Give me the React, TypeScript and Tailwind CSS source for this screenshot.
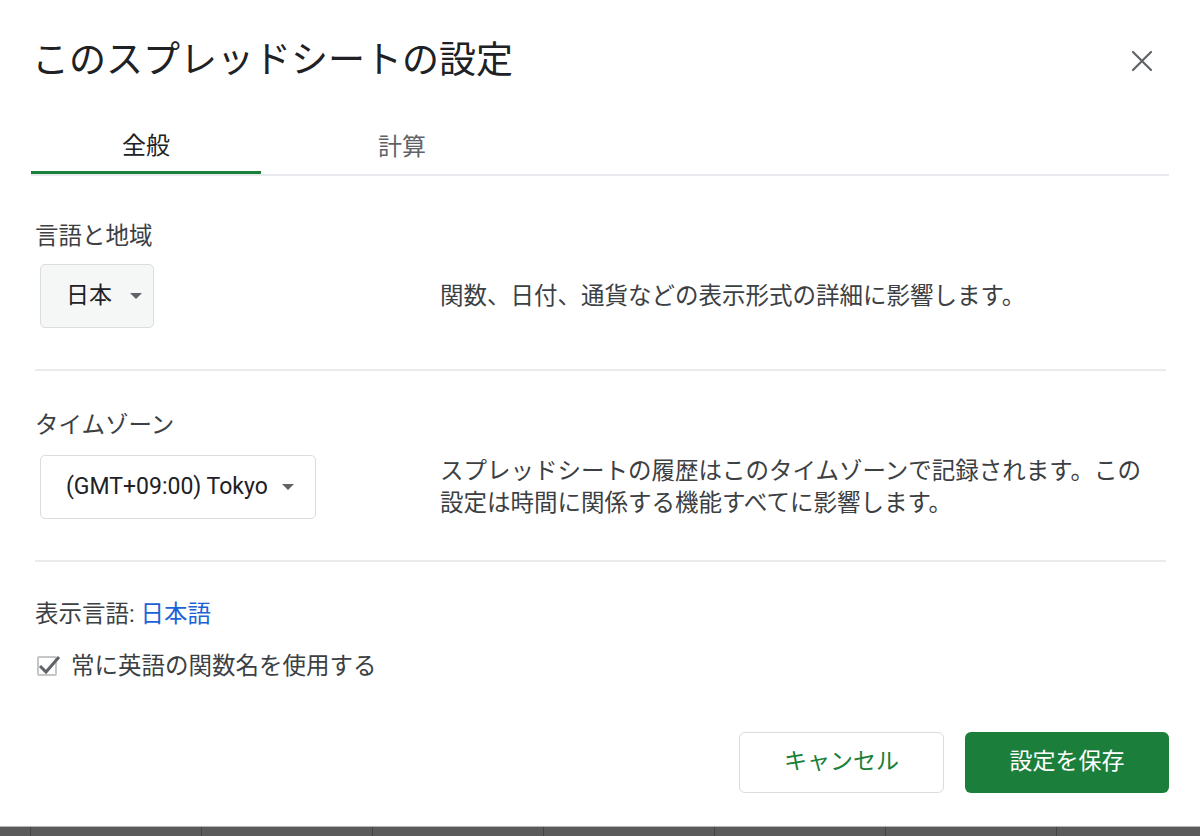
import React from "react";

const FONT = { fontFamily: 'Roboto, "Noto Sans CJK JP", "Noto Sans", sans-serif' };

function Caret() {
  return (
    <svg width="12" height="6" viewBox="0 0 12 6" className="shrink-0">
      <path d="M0 0 L12 0 L6 6 Z" fill="#5f6368" />
    </svg>
  );
}

function Divider() {
  return <div className="ml-[4px] mr-[3px] h-[2px] bg-[#ebebeb]" />;
}

export default function App() {
  const cols = [30, 171, 171, 171, 171, 171, 171, 144];

  return (
    <div className="w-[1200px] h-[836px] flex flex-col bg-white overflow-hidden" style={FONT}>
      <div className="flex-1 px-[31px]">
        {/* header */}
        <div className="flex items-start justify-between pt-[39px]">
          <h1 className="pl-[1px] text-[37px] leading-[44px] font-normal text-[#202124]">
            このスプレッドシートの設定
          </h1>
          <button aria-label="閉じる" className="mt-[10px] mr-[15px] w-[24px] h-[24px] flex items-center justify-center">
            <svg width="22" height="22" viewBox="0 0 22 22">
              <path d="M2 2 L20 20 M20 2 L2 20" stroke="#5f6368" strokeWidth="2.2" strokeLinecap="round" />
            </svg>
          </button>
        </div>

        {/* tabs */}
        <div className="mt-[37px] flex border-b-2 border-[#e8eaed]">
          <div className="w-[230px] h-[54px] -mb-[2px] flex items-center justify-center border-b-[3px] border-[#188038] text-[24px] text-[#202124]">
            全般
          </div>
          <div className="w-[282px] h-[54px] flex items-center justify-center text-[24px] text-[#5f6368]">
            計算
          </div>
        </div>

        {/* 言語と地域 */}
        <div className="ml-[4px] mt-[44px] text-[23.5px] leading-[32px] text-[#3c4043]">言語と地域</div>
        <div className="ml-[4px] mt-[12px] grid grid-cols-[405px_1fr] items-center">
          <div className="pl-[5px]">
            <div className="w-[114px] h-[64px] flex items-center gap-[18px] pl-[25px] rounded-[5px] border border-[#dadce0] bg-[#f5f6f6] text-[23px] text-[#202124]">
              日本
              <Caret />
            </div>
          </div>
          <p className="text-[23.5px] leading-[32px] text-[#3c4043]">
            関数、日付、通貨などの表示形式の詳細に影響します。
          </p>
        </div>
        <div className="mt-[41px]">
          <Divider />
        </div>

        {/* タイムゾーン */}
        <div className="ml-[4px] mt-[38px] text-[23.5px] leading-[32px] text-[#3c4043]">タイムゾーン</div>
        <div className="ml-[4px] mt-[14px] grid grid-cols-[405px_1fr] items-center">
          <div className="pl-[5px]">
            <div className="w-[276px] h-[64px] flex items-center gap-[14px] pl-[25px] rounded-[5px] border border-[#dadce0] bg-white text-[23px] text-[#202124]">
              (GMT+09:00) Tokyo
              <Caret />
            </div>
          </div>
          <p className="w-[715px] text-[23.5px] leading-[32px] text-[#3c4043]">
            スプレッドシートの履歴はこのタイムゾーンで記録されます。この設定は時間に関係する機能すべてに影響します。
          </p>
        </div>
        <div className="mt-[41px]">
          <Divider />
        </div>

        {/* 表示言語 */}
        <div className="ml-[4px] mt-[36px] text-[23.5px] leading-[32px] text-[#3c4043]">
          表示言語: <span className="text-[#1a62d6]">日本語</span>
        </div>
        <label className="ml-[6px] mt-[20px] flex items-center gap-[14px] text-[23.5px] leading-[32px] text-[#3c4043]">
          <span className="relative w-[20px] h-[20px] border-2 border-[#c4c7c5] rounded-[2px] shrink-0">
            <svg width="24" height="24" viewBox="0 0 24 24" className="absolute -top-[6px] -left-[2px]">
              <path d="M3 14 L9 20 L22 5" fill="none" stroke="#5f6368" strokeWidth="3" />
            </svg>
          </span>
          常に英語の関数名を使用する
        </label>

        {/* buttons */}
        <div className="mt-[50px] flex justify-end gap-[21px]">
          <button className="w-[205px] h-[61px] rounded-[6px] border border-[#dadce0] bg-white text-[23px] text-[#188038]">
            キャンセル
          </button>
          <button className="w-[204px] h-[61px] rounded-[6px] bg-[#1b7f3b] text-[23px] text-white">
            設定を保存
          </button>
        </div>
      </div>

      {/* sheet grid behind the dialog */}
      <div className="h-[10px] flex bg-[#5b5b5b] border-t border-[#b4b4b4]">
        {cols.map((w, i) => (
          <div
            key={i}
            className={i === 0 ? "h-full shrink-0" : "h-full shrink-0 border-l border-[#444444]"}
            style={{ width: w }}
          />
        ))}
      </div>
    </div>
  );
}
